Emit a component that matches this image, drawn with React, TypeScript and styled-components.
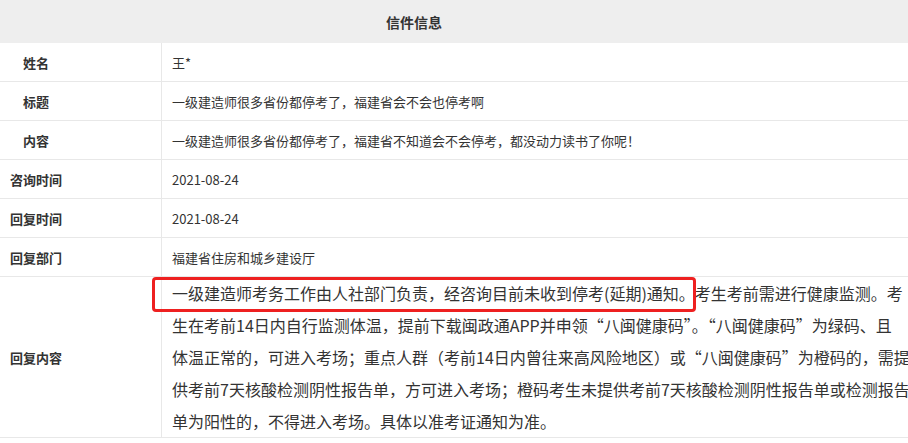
import React from 'react'
import styled, { createGlobalStyle } from 'styled-components'

const GlobalStyle = createGlobalStyle`
  html, body {
    margin: 0;
    padding: 0;
    background: #fff;
    overflow: hidden;
  }
  body {
    font-family: "Noto Sans CJK SC", "Noto Sans", sans-serif;
    color: #333;
  }
`

const rows = [
  { label: '姓名', value: '王*' },
  { label: '标题', value: '一级建造师很多省份都停考了，福建省会不会也停考啊' },
  { label: '内容', value: '一级建造师很多省份都停考了，福建省不知道会不会停考，都没动力读书了你呢！' },
  { label: '咨询时间', value: '2021-08-24' },
  { label: '回复时间', value: '2021-08-24' },
  { label: '回复部门', value: '福建省住房和城乡建设厅' },
]

const replyLines = [
  '生在考前14日内自行监测体温，提前下载闽政通APP并申领“八闽健康码”。“八闽健康码”为绿码、且',
  '体温正常的，可进入考场；重点人群（考前14日内曾往来高风险地区）或“八闽健康码”为橙码的，需提',
  '供考前7天核酸检测阴性报告单，方可进入考场；橙码考生未提供考前7天核酸检测阴性报告单或检测报告',
  '单为阳性的，不得进入考场。具体以准考证通知为准。',
]

const Sheet = styled.div`
  width: 100%;
  overflow: hidden;
`

const HeadRow = styled.div`
  height: 43px;
  background: #eeeeee;
  display: flex;
  align-items: center;
  justify-content: center;
  padding-right: 80px;
  font-size: 14px;
  font-weight: bold;
  color: #333;
`

const Row = styled.div`
  display: grid;
  grid-template-columns: 162px minmax(0, 1fr);
  border-bottom: 1px solid #e8e8e8;
`

const LabelCell = styled.div`
  display: flex;
  align-items: center;
  padding-left: 10px;
  border-right: 1px solid #e8e8e8;
  font-size: 13px;
  font-weight: bold;
  color: #333;
`

const Label = styled.span`
  display: inline-block;
  width: 52px;
  text-align: center;
`

const ValueCell = styled.div<{ $tall?: boolean }>`
  min-height: ${p => (p.$tall ? '160px' : '38px')};
  display: flex;
  flex-direction: column;
  justify-content: center;
  padding-left: 10px;
  font-size: ${p => (p.$tall ? '16px' : '13px')};
  color: #333;
`

const Line = styled.div`
  white-space: nowrap;
  line-height: 32px;
`

const Marked = styled.span`
  display: inline-block;
  position: relative;
  vertical-align: top;
  line-height: 32px;

  &::after {
    content: '';
    position: absolute;
    left: -20px;
    right: -1px;
    top: 0;
    bottom: -3px;
    border: 3px solid #ee2020;
    border-radius: 4px;
    pointer-events: none;
  }
`

export default function App() {
  return (
    <Sheet>
      <GlobalStyle />
      <HeadRow>信件信息</HeadRow>
      {rows.map(r => (
        <Row key={r.label}>
          <LabelCell>
            <Label>{r.label}</Label>
          </LabelCell>
          <ValueCell>{r.value}</ValueCell>
        </Row>
      ))}
      <Row>
        <LabelCell>
          <Label>回复内容</Label>
        </LabelCell>
        <ValueCell $tall>
          <Line>
            <Marked>一级建造师考务工作由人社部门负责，经咨询目前未收到停考(延期)通知。</Marked>
            考生考前需进行健康监测。考
          </Line>
          {replyLines.map(l => (
            <Line key={l}>{l}</Line>
          ))}
        </ValueCell>
      </Row>
    </Sheet>
  )
}
